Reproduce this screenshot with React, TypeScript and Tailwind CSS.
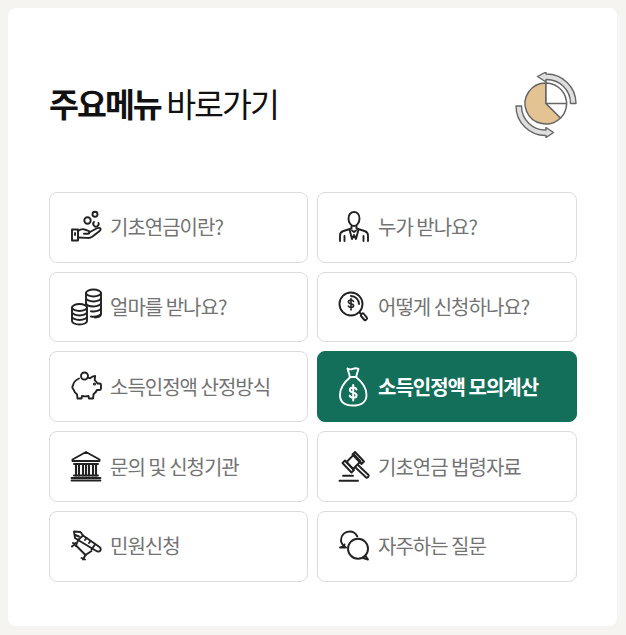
import type { ReactNode } from 'react';

const stroke = {
  fill: 'none',
  stroke: 'currentColor',
  strokeWidth: 1.9,
  strokeLinecap: 'round' as const,
  strokeLinejoin: 'round' as const,
};

function Icon({ children }: { children: ReactNode }) {
  return (
    <svg viewBox="0 0 32 32" className="h-8 w-8 shrink-0 overflow-visible" {...stroke}>
      {children}
    </svg>
  );
}

const icons: Record<string, ReactNode> = {
  coins: (
    <Icon>
      <rect x="1" y="18.500" width="6" height="11" />
      <path d="M4 22v2" />
      <path d="M7 20c2.500-1.800 4.500-2.300 6.500-1.500l4 1.300c1.700.6 1.300 3-.5 3h-4" />
      <path d="M18 21.500l7.500-4c2-1 4-.8 4.200.4.200 1-.7 1.800-1.700 2.500l-6.500 5c-1.700 1.300-3.500 1.900-5.500 1.500L7 26.500" />
      <circle cx="16.500" cy="9.500" r="3.200" />
      <circle cx="24" cy="3.300" r="2.500" />
      <path d="M27.500 12a2.700 2.700 0 1 1-4.500-1" />
    </Icon>
  ),
  person: (
    <Icon>
      <path d="M9.500 7.500C9.500 3.500 12 1 15 1s5.500 2.500 5.500 6.500-2.500 7.500-5.500 7.500-5.500-3.500-5.500-7.500z" />
      <path d="M12.500 15v2.500L4.500 20C2 20.800 1 22.500 1 24.500V30" />
      <path d="M17.500 15v2.500L25.500 20c2.500.8 3.500 2.500 3.500 4.500V30" />
      <path d="M5.500 25v5M24.500 25v5" />
      <path d="M10.500 18.500L13 28l2-4 2 4 2.500-9.500" />
      <path d="M13 19.500l2 1.500 2-1.500" />
    </Icon>
  ),
  stack: (
    <Icon>
      <ellipse cx="22.500" cy="2" rx="7.500" ry="3.500" />
      <path d="M15 2v11M30 2v21c0 2-2.500 3.300-6 3.500" />
      <path d="M15 7c0 1.900 3.300 3.500 7.500 3.500S30 8.900 30 7M15 12c.3 1.900 3.300 3.500 7.500 3.500S30 13.900 30 12M20 20.300c.8.100 1.600.2 2.500.2 4.200 0 7.500-1.600 7.500-3.500M20 25.500c.8.100 1.600.2 2.500.2 4.200 0 7.500-1.600 7.500-3.500" />
      <ellipse cx="8.500" cy="16.500" rx="7.500" ry="3.500" />
      <path d="M1 16.500V30c0 2 3.300 3.500 7.500 3.500S16 32 16 30V16.500" />
      <path d="M1 21c0 1.900 3.300 3.500 7.500 3.500S16 22.900 16 21M1 25.500C1 27.400 4.300 29 8.500 29S16 27.400 16 25.500" />
    </Icon>
  ),
  search: (
    <Icon>
      <circle cx="12" cy="13" r="11.500" />
      <path d="M12 5a8 8 0 0 1 8 8" />
      <path d="M14.500 10.500c-.4-1-1.300-1.500-2.500-1.500-1.500 0-2.600.8-2.600 1.900 0 2.500 5.200 1.200 5.200 3.700 0 1.100-1.100 1.900-2.600 1.900-1.300 0-2.200-.5-2.600-1.500M12 7.500v11.500" strokeWidth="1.600" />
      <path d="M20.500 21.500l1.500 1.500M22 25l3.500 4c.9.900 3.300-1.300 2.400-2.300L24.500 22.500c-1-1-3.300 1.600-2.500 2.500z" />
    </Icon>
  ),
  piggy: (
    <Icon>
      <circle cx="13.500" cy="5" r="3.500" />
      <path d="M8 7.500C4.500 9 2.500 11.500 2 14.500c-1 1-.8 3 .4 3.800.6 2 1.900 3.800 3.600 5l.5 4.200h4l.5-2.500c2 .5 4.500.5 6.500 0l.5 2.500h4l.6-4.500c1.500-1 2.700-2.400 3.400-4h2.500c1 0 1.500-.6 1.500-1.500v-3.500c0-1-.6-1.500-1.500-1.500h-2c-.7-1.400-1.700-2.500-2.800-3.300l.4-4.200c-2.200 0-3.800 1-4.800 2.200-.8-.2-1.800-.4-2.700-.4" />
      <circle cx="23.500" cy="13" r=".6" />
    </Icon>
  ),
  bag: (
    <Icon>
      <path d="M8.500-2.500c2 1.200 3.500 1.200 5.500.3 2-.9 3.500-.8 5.500 0L17 6h-6z" />
      <path d="M10.500 6h7" />
      <path d="M11 6.500C6 10.500 1 17 1 24c0 7 5 10.500 13 10.500S27.500 31 27.500 24c0-7-5-13.500-10-17.500" />
      <path d="M17.500 18.500c-.5-1.400-1.800-2-3.300-2-2 0-3.400 1-3.400 2.600 0 3.400 6.800 1.700 6.800 5.100 0 1.500-1.400 2.500-3.400 2.500-1.700 0-3-.8-3.500-2.100M14.200 14v15.500" strokeWidth="2" />
    </Icon>
  ),
  bank: (
    <Icon>
      <path d="M15 1L1.500 8.500v1.500h27V8.500z" />
      <path d="M3 13h24M3 24.500h24" />
      <path d="M5 13v11.500M8 13v11.500M12 13v11.500M15 13v11.500M18 13v11.500M22 13v11.500M25 13v11.500" strokeWidth="2.100" />
      <path d="M.5 27h29M.5 29.500h29" strokeWidth="1.800" />
    </Icon>
  ),
  gavel: (
    <Icon>
      <path d="M7.500 11L15 3.500l6.500 7L14 18z" />
      <path d="M16 1l-2.500 2.500 9 9.500 2.500-2.500zM6 9.500L3.500 12l9 9.500 2.500-2.500z" />
      <path d="M19 14l10.500 10c1 1-1.300 3.500-2.300 2.500L16.500 16.500" />
      <path d="M4 24.700h10M.5 29.700H19" />
    </Icon>
  ),
  pen: (
    <Icon>
      <path d="M3 1.500l6.500.5 2.500 3.500-5 4.500-3-2z" />
      <path d="M4 5l4 1.500" />
      <path d="M12 5.500l16.500 11.500c2 1.500 1.500 4-.5 4.500-1 .3-2 0-3-.8L7 10" />
      <path d="M24 14.500l-3.500 5M15.500 8L14 10M19.500 11l-1.500 2" />
      <path d="M7 10.500L5 15.500l9.500 9.500 6-4" />
      <path d="M4.500 13L1 16.500M5 16l-3-3M14.500 25l-2.500 4.500M10.500 28l3.500 1.500" />
    </Icon>
  ),
  chat: (
    <Icon>
      <path d="M6 17C3.500 15 2 13 2 10 2 5 6 1.500 10.500 1.500c3.500 0 6.500 2 7.800 5" />
      <path d="M5.500 14.500L5 16.500l-4 1h6" />
      <circle cx="19" cy="18.700" r="10" />
      <path d="M26.500 25.700l2.500 3.800-5-1.500" />
    </Icon>
  ),
};

const menus = [
  { icon: 'coins', label: '기초연금이란?' },
  { icon: 'person', label: '누가 받나요?' },
  { icon: 'stack', label: '얼마를 받나요?' },
  { icon: 'search', label: '어떻게 신청하나요?' },
  { icon: 'piggy', label: '소득인정액 산정방식' },
  { icon: 'bag', label: '소득인정액 모의계산', active: true },
  { icon: 'bank', label: '문의 및 신청기관' },
  { icon: 'gavel', label: '기초연금 법령자료' },
  { icon: 'pen', label: '민원신청' },
  { icon: 'chat', label: '자주하는 질문' },
];

function PieIcon() {
  return (
    <svg viewBox="0 0 62 66" className="h-[66px] w-[62px] shrink-0">
      <path d="M31 31.500V11a20.800 20.500 0 1 0 14.500 35z" fill="#e4c392" stroke="#666" strokeWidth="1.500" />
      <path d="M31 31.500V11a20.800 20.500 0 0 1 14.500 35z" fill="#fff" stroke="#666" strokeWidth="1.500" />
      <path d="M31 31.500h20.800" stroke="#666" strokeWidth="1.500" />
      <path
        d="M31 2a29.500 29.500 0 0 1 30 29.500h-5.500A24 24 0 0 0 31 7.500V10l-8.500-5.500L31 0z"
        fill="#dedede"
        stroke="#666"
        strokeWidth="1.400"
        strokeLinejoin="round"
      />
      <path
        d="M31 63.500A29.500 29.500 0 0 1 1 34h5.500A24 24 0 0 0 31 58v-2.500l7.500 5-7.500 5z"
        fill="#dedede"
        stroke="#666"
        strokeWidth="1.400"
        strokeLinejoin="round"
      />
    </svg>
  );
}

export default function App() {
  return (
    <div className="min-h-[635px] bg-[#f5f4f0] pt-2 pr-[9px] pb-[9px] pl-2 font-['Noto_Sans_CJK_KR','Noto_Sans',sans-serif]">
      <div className="h-[618px] rounded-lg bg-white pt-[64px] pr-10 pl-[41px]">
        <div className="flex h-[66px] items-center justify-between">
          <h2 className="-mt-1 text-[32.5px] leading-[66px] font-normal tracking-[-0.06em] text-[#111]">
            <strong className="font-bold">주요메뉴</strong> 바로가기
          </h2>
          <PieIcon />
        </div>
        <div className="mt-[53.9px] grid grid-cols-[259px_260px] gap-x-[9px] gap-y-[9px]">
          {menus.map((menu) => (
            <a
              key={menu.label}
              className={`flex h-[70.75px] items-center gap-[7px] rounded-lg border pl-[21px] text-[20px] tracking-[-0.05em] ${
                menu.active
                  ? 'border-[#136e5a] bg-[#136e5a] font-bold text-white'
                  : 'border-[#dcdcdc] bg-white text-[#737373]'
              }`}
            >
              <span className={menu.active ? 'text-white' : 'text-[#222]'}>{icons[menu.icon]}</span>
              {menu.label}
            </a>
          ))}
        </div>
      </div>
    </div>
  );
}
